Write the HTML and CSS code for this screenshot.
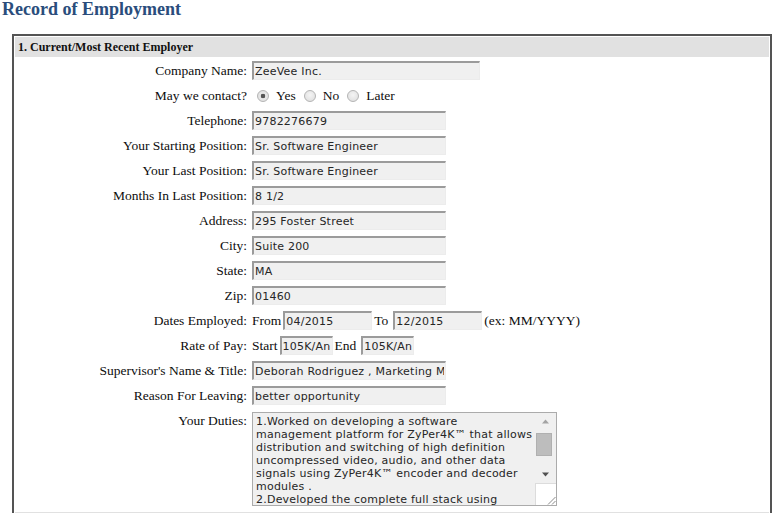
FILE: index.html
```
<!DOCTYPE html>
<html>
<head>
<meta charset="utf-8">
<link rel="stylesheet" href="styles.css">
</head>
<body>
<h1 class="title">Record of Employment</h1>
<div class="box">
  <div class="section-head">1. Current/Most Recent Employer</div>
  <div class="form">
    <div class="lbl">Company Name:</div>
    <div class="fld"><input class="txt w-xl" value="ZeeVee Inc."></div>

    <div class="lbl">May we contact?</div>
    <div class="fld radios">
      <input type="radio" class="rad" name="c" checked> <span>Yes</span>
      <input type="radio" class="rad" name="c"> <span>No</span>
      <input type="radio" class="rad" name="c"> <span>Later</span>
    </div>

    <div class="lbl">Telephone:</div>
    <div class="fld"><input class="txt w-lg" value="9782276679"></div>

    <div class="lbl">Your Starting Position:</div>
    <div class="fld"><input class="txt w-lg" value="Sr. Software Engineer"></div>

    <div class="lbl">Your Last Position:</div>
    <div class="fld"><input class="txt w-lg" value="Sr. Software Engineer"></div>

    <div class="lbl">Months In Last Position:</div>
    <div class="fld"><input class="txt w-lg" value="8 1/2"></div>

    <div class="lbl">Address:</div>
    <div class="fld"><input class="txt w-lg" value="295 Foster Street"></div>

    <div class="lbl">City:</div>
    <div class="fld"><input class="txt w-lg" value="Suite 200"></div>

    <div class="lbl">State:</div>
    <div class="fld"><input class="txt w-lg" value="MA"></div>

    <div class="lbl">Zip:</div>
    <div class="fld"><input class="txt w-lg" value="01460"></div>

    <div class="lbl">Dates Employed:</div>
    <div class="fld"><span>From</span> <input class="txt w-md" value="04/2015"> <span class="wd-gap">To</span> <input class="txt w-md" value="12/2015"> <span>(ex: MM/YYYY)</span></div>

    <div class="lbl">Rate of Pay:</div>
    <div class="fld"><span>Start</span> <input class="txt w-sm" value="105K/An"> <span class="wd-gap">End</span> <input class="txt w-sm" value="105K/An"></div>

    <div class="lbl">Supervisor's Name &amp; Title:</div>
    <div class="fld"><input class="txt w-lg" value="Deborah Rodriguez , Marketing Manager"></div>

    <div class="lbl">Reason For Leaving:</div>
    <div class="fld"><input class="txt w-lg" value="better opportunity"></div>

    <div class="lbl lbl-top">Your Duties:</div>
    <div class="fld fld-top">
      <div class="area">
        <div class="area-text">1.Worked on developing a software<br>management platform for ZyPer4K™ that allows<br>distribution and switching of high definition<br>uncompressed video, audio, and other data<br>signals using ZyPer4K™ encoder and decoder<br>modules .<br>2.Developed the complete full stack using</div>
        <div class="sbar">
          <div class="sb-btn"><svg width="9" height="5" viewBox="0 0 9 5"><path d="M4.5 0.5 L8 4.5 L1 4.5 Z" fill="#a3a3a3"/></svg></div>
          <div class="sb-track"><div class="sb-thumb"></div></div>
          <div class="sb-btn"><svg width="9" height="5" viewBox="0 0 9 5"><path d="M1 0.5 L8 0.5 L4.5 4.5 Z" fill="#505050"/></svg></div>
          <div class="sb-corner"><svg width="10" height="10" viewBox="0 0 10 10"><path d="M9.5 2 L2 9.5 M9.5 6 L6 9.5" stroke="#8a8a8a" stroke-width="1"/></svg></div>
        </div>
      </div>
    </div>
  </div>
  <div class="section-head">&nbsp;</div>
</div>
</body>
</html>
```
FILE: styles.css
```
html, body {
  margin: 0;
  padding: 0;
  background: #ffffff;
}
body {
  font-family: "Liberation Serif", "Times New Roman", serif;
  font-size: 13.5px;
  color: #0d0d0d;
}
.title {
  margin: 0;
  padding: 0 0 0 2px;
  font-size: 18px;
  line-height: 18px;
  height: 34px;
  font-weight: bold;
  color: #2a4d7c;
}
.box {
  margin-left: 12px;
  width: 760px;
  box-sizing: border-box;
  border: 2px solid #545454;
  border-bottom: none;
  padding: 1px 1px 0 1px;
}
.section-head {
  background: #e1e1e1;
  height: 20px;
  line-height: 20px;
  padding-left: 3px;
  font-size: 12px;
  font-weight: bold;
  color: #111;
}
.form {
  display: grid;
  grid-template-columns: 232px 1fr;
  column-gap: 5px;
  grid-auto-rows: 25px;
  align-items: center;
  padding-top: 1px;
  padding-bottom: 4px;
}
.lbl {
  text-align: right;
  white-space: nowrap;
}
.fld {
  white-space: nowrap;
  display: flex;
  align-items: center;
  gap: 2px;
}
.wd-gap {
  margin-right: 3px;
}
.lbl-top {
  align-self: start;
  padding-top: 5px;
}
.form .fld-top {
  align-self: start;
  padding-top: 4px;
  grid-row: span 4;
}
.txt {
  box-sizing: border-box;
  height: 19px;
  margin: 0;
  padding: 0 1px 0 1px;
  font-family: "DejaVu Sans", Verdana, sans-serif;
  font-size: 11px;
  letter-spacing: 0.22px;
  color: #262626;
  background: #f0f0f0;
  border-top: 2px solid #9b9b9b;
  border-left: 2px solid #9b9b9b;
  border-right: 1px solid #ececec;
  border-bottom: 1px solid #ececec;
  outline: none;
}
.w-xl { width: 228px; }
.w-lg { width: 194px; }
.w-md { width: 89px; }
.w-sm { width: 53px; }

.radios {
  gap: 0;
  padding-top: 1px;
}
.rad {
  -webkit-appearance: none;
  appearance: none;
  width: 12px;
  height: 12px;
  margin: 0 7px 0 8px;
  border-radius: 50%;
  border: 1px solid #b4b4b4;
  background: radial-gradient(circle at 50% 40%, #f4f4f4 0%, #dcdcdc 100%);
  box-sizing: border-box;
}
.rad:first-child {
  margin-left: 5px;
}
.rad:checked {
  background: radial-gradient(circle, #555 0, #555 2px, #e8e8e8 2.6px, #dcdcdc 100%);
}

.area {
  width: 305px;
  height: 94px;
  box-sizing: border-box;
  border: 1px solid #ababab;
  background: #f0f0f0;
  display: flex;
  overflow: hidden;
}
.area-text {
  flex: 1;
  padding: 2px 0 0 3px;
  font-family: "DejaVu Sans", Verdana, sans-serif;
  font-size: 11px;
  letter-spacing: 0.22px;
  line-height: 13px;
  color: #262626;
  white-space: nowrap;
  overflow: hidden;
}
.sbar {
  width: 21px;
  display: flex;
  flex-direction: column;
  background: #f0f0f0;
}
.sb-btn {
  height: 17px;
  display: flex;
  align-items: center;
  justify-content: center;
}
.sb-track {
  flex: 1;
  padding: 3px 4px 0 1px;
}
.sb-thumb {
  height: 21px;
  background: #bdbdbd;
  border: 1px solid #b0b0b0;
}
.sb-corner {
  height: 21px;
  background: #ffffff;
  border-top: 1px solid #dcdcdc;
  border-left: 1px solid #dcdcdc;
  display: flex;
  align-items: flex-end;
  justify-content: flex-end;
}
```
